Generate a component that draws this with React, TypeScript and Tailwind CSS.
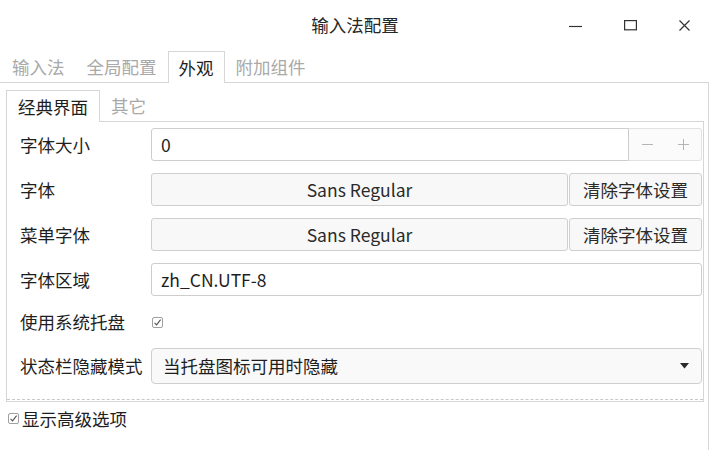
import React from 'react'

const FONT = { fontFamily: '"Noto Sans CJK SC", "Noto Sans", sans-serif' }

function CheckMark({ className }: { className?: string }) {
  return (
    <span className={`flex h-[11px] w-[11px] items-center justify-center rounded-[2px] border border-[#a0a0a0] bg-white ${className ?? ''}`}>
      <svg width="9" height="9" viewBox="0 0 9 9" fill="none">
        <path d="M1.5 4.8 L3.6 6.9 L7.6 1.6" stroke="#555" strokeWidth="1.1" />
      </svg>
    </span>
  )
}

function WindowControls() {
  return (
    <div className="flex items-center gap-[42px] pr-[20px]">
      <svg width="13" height="13" viewBox="0 0 13 13">
        <path d="M0 7.5 H13" stroke="#333" strokeWidth="1.2" />
      </svg>
      <svg width="13" height="11" viewBox="0 0 13 11" fill="none">
        <rect x="0.6" y="0.6" width="11.8" height="9.2" stroke="#333" strokeWidth="1.2" />
      </svg>
      <svg width="11" height="11" viewBox="0 0 11 11">
        <path d="M0.5 0.5 L10.5 10.5 M10.5 0.5 L0.5 10.5" stroke="#333" strokeWidth="1.2" />
      </svg>
    </div>
  )
}

const OUTER_TABS = ['输入法', '全局配置', '外观', '附加组件']

export default function App() {
  return (
    <div className="h-[450px] w-[710px] overflow-hidden bg-white text-[17.5px] leading-none text-[#1e1e1e]" style={FONT}>
      {/* Title bar */}
      <header className="grid h-[51px] grid-cols-[1fr_auto_1fr] items-center pb-[1px]">
        <div />
        <div className="text-[#262626]">输入法配置</div>
        <div className="flex justify-end">
          <WindowControls />
        </div>
      </header>

      {/* Outer tabs */}
      <div className="flex h-[31px] items-stretch">
        {OUTER_TABS.map((t) =>
          t === '外观' ? (
            <div
              key={t}
              className="relative z-10 mb-[-1px] flex items-center border border-b-0 border-[#d6d6d6] bg-white px-[10px] text-[#1e1e1e]"
            >
              {t}
            </div>
          ) : (
            <div key={t} className="flex items-center px-[11px] text-[#a9a9a9] first:pl-[12px]">
              {t}
            </div>
          )
        )}
      </div>

      {/* Outer panel */}
      <div className="h-[368px] w-[709px] border-r border-t border-[#d6d6d6] pl-[6px] pt-[7px]">
        {/* Inner tabs */}
        <div className="flex h-[31px] items-stretch">
          <div className="relative z-10 mb-[-1px] flex items-center border border-b-0 border-[#d6d6d6] bg-white px-[11px]">
            经典界面
          </div>
          <div className="flex items-center px-[11px] text-[#a9a9a9]">其它</div>
        </div>

        {/* Inner panel */}
        <div className="h-[281px] w-[698px] border border-[#d6d6d6] pt-[6px]">
          <div className="flex h-[272px] flex-col gap-[12px] border-b border-dashed border-[#c8c8c8] pl-[13px] pr-[1px]">
            {/* 字体大小 */}
            <div className="grid h-[33px] grid-cols-[131px_1fr] items-center">
              <span>字体大小</span>
              <div className="flex h-full">
                <div className="flex flex-1 items-center rounded-l-[3px] border border-[#cdcdcd] bg-white pl-[9px]">0</div>
                <div className="flex w-[73px] items-center justify-around rounded-r-[3px] border border-l-0 border-[#e2e2e2] bg-[#fbfbfb] text-[#b8b8b8]">
                  <svg width="13" height="13" viewBox="0 0 13 13">
                    <path d="M1 6.5 H12" stroke="#b5b5b5" strokeWidth="1" />
                  </svg>
                  <svg width="13" height="13" viewBox="0 0 13 13">
                    <path d="M1 6.5 H12 M6.5 1 V12" stroke="#b5b5b5" strokeWidth="1" />
                  </svg>
                </div>
              </div>
            </div>

            {/* 字体 */}
            {['字体', '菜单字体'].map((label) => (
              <div key={label} className="grid h-[33px] grid-cols-[131px_1fr] items-center">
                <span>{label}</span>
                <div className="flex h-full gap-[1px]">
                  <div className="flex flex-1 items-center justify-center rounded-[3px] border border-[#cfcfcf] bg-[#f8f8f8] text-[#2a2a2a]">
                    Sans Regular
                  </div>
                  <div className="flex w-[133px] items-center justify-center rounded-[3px] border border-[#cfcfcf] bg-[#f8f8f8] text-[#2a2a2a]">
                    清除字体设置
                  </div>
                </div>
              </div>
            ))}

            {/* 字体区域 */}
            <div className="grid h-[33px] grid-cols-[131px_1fr] items-center">
              <span>字体区域</span>
              <div className="flex h-full items-center rounded-[3px] border border-[#cdcdcd] bg-white pl-[9px]">zh_CN.UTF-8</div>
            </div>

            {/* 使用系统托盘 */}
            <div className="grid h-[28px] grid-cols-[131px_1fr] items-center">
              <span>使用系统托盘</span>
              <CheckMark className="ml-[1px]" />
            </div>

            {/* 状态栏隐藏模式 */}
            <div className="grid h-[36px] grid-cols-[131px_1fr] items-center">
              <span className="whitespace-nowrap">状态栏隐藏模式</span>
              <div className="flex h-full items-center justify-between rounded-[4px] border border-[#cfcfcf] bg-[#f9f9f9] pl-[11px] pr-[12px]">
                <span>当托盘图标可用时隐藏</span>
                <svg width="9" height="6" viewBox="0 0 9 6">
                  <path d="M0 0 H9 L4.5 5.5 Z" fill="#2a2a2a" />
                </svg>
              </div>
            </div>
          </div>
        </div>

        {/* Show advanced */}
        <div className="flex items-center gap-[3px] pl-[2px] pt-[8px]">
          <CheckMark />
          <span>显示高级选项</span>
        </div>
      </div>
    </div>
  )
}
